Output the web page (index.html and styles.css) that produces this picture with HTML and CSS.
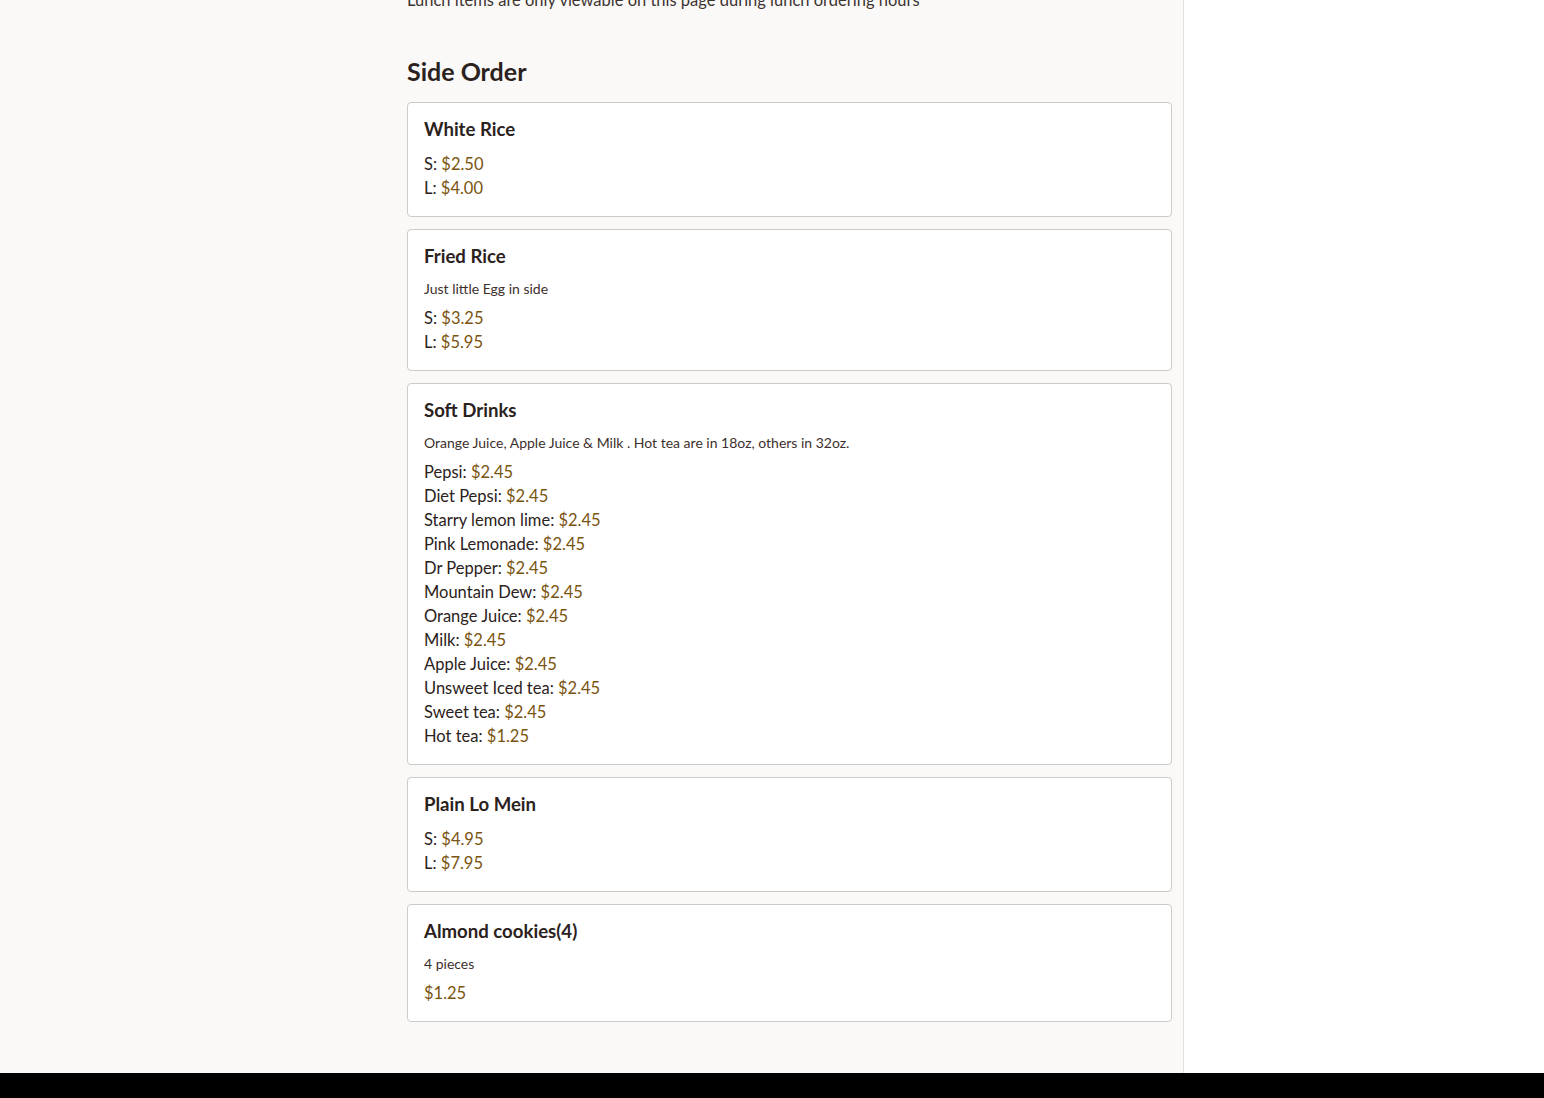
FILE: index.html
```html
<!DOCTYPE html>
<html lang="en">
<head>
<meta charset="utf-8">
<title>Side Order</title>
<link rel="stylesheet" href="styles.css">
</head>
<body>
<div class="page">
  <main class="main">
    <div class="content">
      <p class="notice">Lunch items are only viewable on this page during lunch ordering hours</p>
      <h2 class="section-title">Side Order</h2>
      <div class="cards">
        <div class="card">
          <h3 class="card-title">White Rice</h3>
          <div class="prices">
            <div class="price-line">S: <span class="price">$2.50</span></div>
            <div class="price-line">L: <span class="price">$4.00</span></div>
          </div>
        </div>
        <div class="card">
          <h3 class="card-title">Fried Rice</h3>
          <p class="desc">Just little Egg in side</p>
          <div class="prices">
            <div class="price-line">S: <span class="price">$3.25</span></div>
            <div class="price-line">L: <span class="price">$5.95</span></div>
          </div>
        </div>
        <div class="card">
          <h3 class="card-title">Soft Drinks</h3>
          <p class="desc">Orange Juice, Apple Juice &amp; Milk . Hot tea are in 18oz, others in 32oz.</p>
          <div class="prices">
            <div class="price-line">Pepsi: <span class="price">$2.45</span></div>
            <div class="price-line">Diet Pepsi: <span class="price">$2.45</span></div>
            <div class="price-line">Starry lemon lime: <span class="price">$2.45</span></div>
            <div class="price-line">Pink Lemonade: <span class="price">$2.45</span></div>
            <div class="price-line">Dr Pepper: <span class="price">$2.45</span></div>
            <div class="price-line">Mountain Dew: <span class="price">$2.45</span></div>
            <div class="price-line">Orange Juice: <span class="price">$2.45</span></div>
            <div class="price-line">Milk: <span class="price">$2.45</span></div>
            <div class="price-line">Apple Juice: <span class="price">$2.45</span></div>
            <div class="price-line">Unsweet Iced tea: <span class="price">$2.45</span></div>
            <div class="price-line">Sweet tea: <span class="price">$2.45</span></div>
            <div class="price-line">Hot tea: <span class="price">$1.25</span></div>
          </div>
        </div>
        <div class="card">
          <h3 class="card-title">Plain Lo Mein</h3>
          <div class="prices">
            <div class="price-line">S: <span class="price">$4.95</span></div>
            <div class="price-line">L: <span class="price">$7.95</span></div>
          </div>
        </div>
        <div class="card">
          <h3 class="card-title">Almond cookies(4)</h3>
          <p class="desc">4 pieces</p>
          <div class="prices">
            <div class="price-line"><span class="price">$1.25</span></div>
          </div>
        </div>
      </div>
    </div>
  </main>
  <aside class="sidebar"></aside>
</div>
<footer class="footer"></footer>
</body>
</html>
```

FILE: styles.css
```css
* { box-sizing: border-box; }

html, body {
  margin: 0;
  padding: 0;
  background: #ffffff;
  font-family: Lato, "Noto Sans", sans-serif;
  color: #2b2220;
}

.page {
  display: flex;
  overflow: hidden;
}

.main {
  width: 1184px;
  flex: none;
  background: #faf9f7;
  border-right: 1px solid #e4e1de;
  padding: 0 12px 51px 407px;
}

.content {
  margin-top: -12px;
}

.sidebar {
  flex: 1;
  background: #ffffff;
}

.notice {
  margin: 0;
  font-size: 16.5px;
  line-height: 24px;
  color: #3d3431;
}

.section-title {
  margin: 44px 0 16px;
  font-size: 25px;
  line-height: 30px;
  font-weight: 700;
  color: #2b2220;
}

.cards {
  display: flex;
  flex-direction: column;
  gap: 12px;
}

.card {
  width: 765px;
  background: #ffffff;
  border: 1px solid #cdcac7;
  border-radius: 4px;
  padding: 16px;
}

.card-title {
  margin: 0 0 13px;
  font-size: 18.6px;
  line-height: 20px;
  font-weight: 700;
  color: #2b2220;
}

.desc {
  margin: 0 0 7px;
  font-size: 14px;
  line-height: 20px;
  color: #3d302c;
}

.price-line {
  font-size: 16.5px;
  line-height: 24px;
  color: #2b2220;
}

.price {
  color: #7a5410;
}

.footer {
  height: 60px;
  background: #000000;
}
```
